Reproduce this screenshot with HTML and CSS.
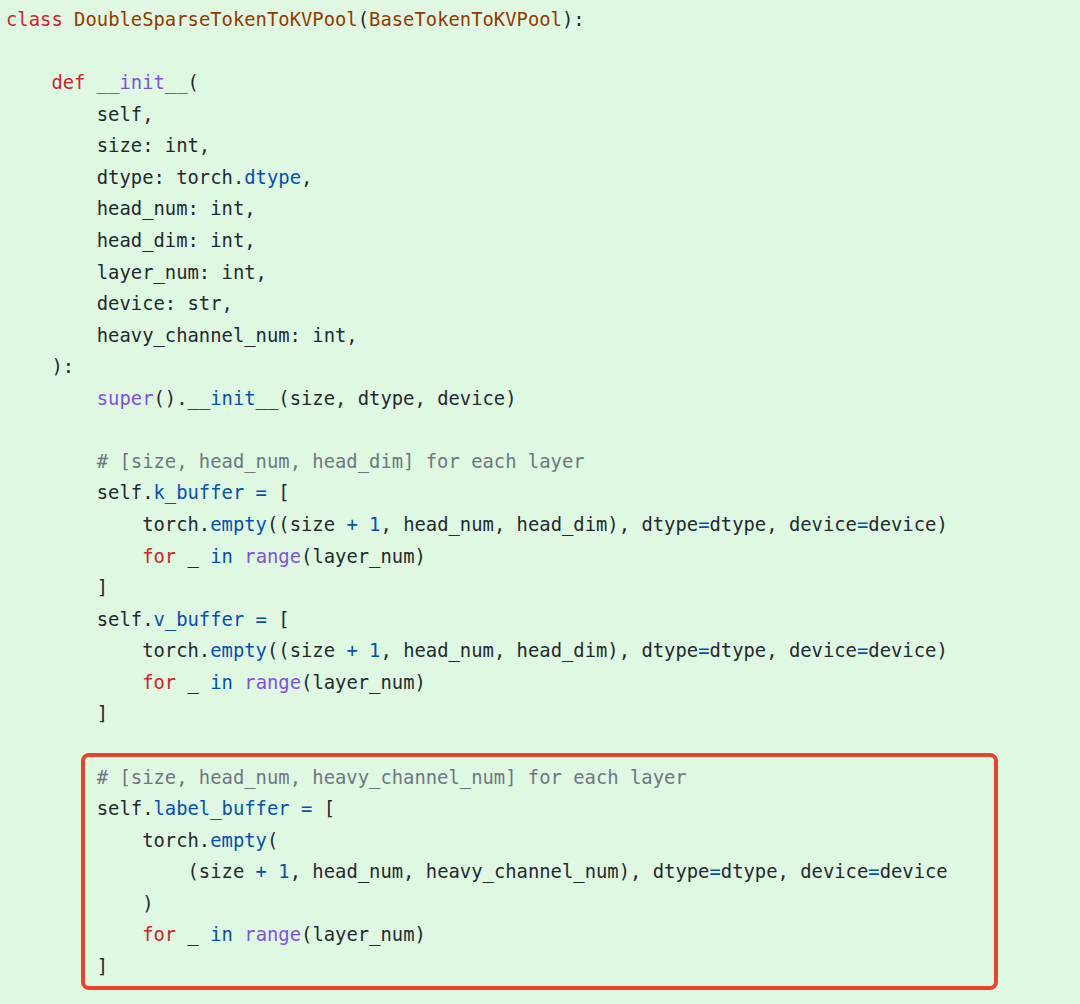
FILE: index.html
```html
<!DOCTYPE html>
<html>
<head>
<meta charset="utf-8">
<link rel="stylesheet" href="styles.css">
</head>
<body>
<div class="code-wrap">
<pre class="code"><span class="kw">class</span> <span class="cls">DoubleSparseTokenToKVPool</span>(<span class="cls">BaseTokenToKVPool</span>):

    <span class="kw">def</span> <span class="fn">__init__</span>(
        self,
        size: int,
        dtype: torch.<span class="attr">dtype</span>,
        head_num: int,
        head_dim: int,
        layer_num: int,
        device: str,
        heavy_channel_num: int,
    ):
        <span class="fn">super</span>().<span class="attr">__init__</span>(size, dtype, device)

        <span class="cm"># [size, head_num, head_dim] for each layer</span>
        self.<span class="attr">k_buffer</span> <span class="op">=</span> [
            torch.<span class="attr">empty</span>((size <span class="op">+</span> <span class="num">1</span>, head_num, head_dim), dtype<span class="op">=</span>dtype, device<span class="op">=</span>device)
            <span class="kw">for</span> _ <span class="op">in</span> <span class="fn">range</span>(layer_num)
        ]
        self.<span class="attr">v_buffer</span> <span class="op">=</span> [
            torch.<span class="attr">empty</span>((size <span class="op">+</span> <span class="num">1</span>, head_num, head_dim), dtype<span class="op">=</span>dtype, device<span class="op">=</span>device)
            <span class="kw">for</span> _ <span class="op">in</span> <span class="fn">range</span>(layer_num)
        ]

        <span class="cm"># [size, head_num, heavy_channel_num] for each layer</span>
        self.<span class="attr">label_buffer</span> <span class="op">=</span> [
            torch.<span class="attr">empty</span>(
                (size <span class="op">+</span> <span class="num">1</span>, head_num, heavy_channel_num), dtype<span class="op">=</span>dtype, device<span class="op">=</span>device
            )
            <span class="kw">for</span> _ <span class="op">in</span> <span class="fn">range</span>(layer_num)
        ]
</pre>
<div class="highlight-box"></div>
</div>
</body>
</html>
```
FILE: styles.css
```css
html, body {
  margin: 0;
  padding: 0;
  background: #dff8e2;
}
.code-wrap {
  position: relative;
  width: 1080px;
  height: 1004px;
  overflow: hidden;
  background: #dff8e2;
}
.code {
  margin: 0;
  padding: 4px 0 0 6px;
  font-family: "DejaVu Sans Mono", monospace;
  font-size: 18.85px;
  line-height: 31.57px;
  color: #24292f;
  white-space: pre;
}
.kw { color: #cf222e; }
.cls { color: #953800; }
.fn { color: #8250df; }
.attr { color: #0550ae; }
.op { color: #0550ae; }
.num { color: #0550ae; }
.cm { color: #6e7781; }
.highlight-box {
  position: absolute;
  left: 81px;
  top: 753px;
  width: 909px;
  height: 229px;
  border: 4px solid #e8432c;
  border-radius: 8px;
}
```
